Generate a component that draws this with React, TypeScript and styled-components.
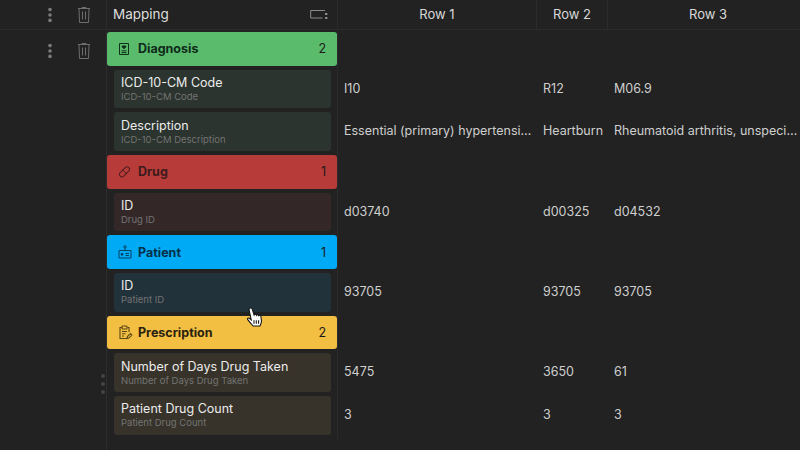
import styled, { createGlobalStyle } from 'styled-components';

type Field = { title: string; sub: string; values: string[] };
type Group = { name: string; tone: keyof typeof tones; fields: Field[] };

const tones = {
  green: { head: '#5abb6d', card: '#2b342e', ink: '#0e2a19', icon: '#0f3219' },
  red: { head: '#b73c39', card: '#332727', ink: '#3d1a1c', icon: '#4e1c1e' },
  blue: { head: '#00aaf5', card: '#22323b', ink: '#03304a', icon: '#054263' },
  yellow: { head: '#f2bf42', card: '#37332a', ink: '#2a2210', icon: '#5b4716' },
};

const groups: Group[] = [
  {
    name: 'Diagnosis',
    tone: 'green',
    fields: [
      { title: 'ICD-10-CM Code', sub: 'ICD-10-CM Code', values: ['I10', 'R12', 'M06.9'] },
      {
        title: 'Description',
        sub: 'ICD-10-CM Description',
        values: ['Essential (primary) hypertension', 'Heartburn', 'Rheumatoid arthritis, unspecified'],
      },
    ],
  },
  {
    name: 'Drug',
    tone: 'red',
    fields: [{ title: 'ID', sub: 'Drug ID', values: ['d03740', 'd00325', 'd04532'] }],
  },
  {
    name: 'Patient',
    tone: 'blue',
    fields: [{ title: 'ID', sub: 'Patient ID', values: ['93705', '93705', '93705'] }],
  },
  {
    name: 'Prescription',
    tone: 'yellow',
    fields: [
      { title: 'Number of Days Drug Taken', sub: 'Number of Days Drug Taken', values: ['5475', '3650', '61'] },
      { title: 'Patient Drug Count', sub: 'Patient Drug Count', values: ['3', '3', '3'] },
    ],
  },
];

function Dots() {
  return (
    <svg width="6" height="16" viewBox="0 0 6 16" fill="#7c7c7c">
      <circle cx="3" cy="2.600" r="1.800" />
      <circle cx="3" cy="8" r="1.800" />
      <circle cx="3" cy="13.400" r="1.800" />
    </svg>
  );
}

function Trash() {
  return (
    <svg width="14" height="16" viewBox="0 0 14 16" fill="none" stroke="#6e6e6e" strokeWidth="1">
      <path d="M1 1.500h12M5 1.500V.5h4v1M2 1.500l.5 14h9l.5-14" />
      <path d="M5.500 4.500v8M8.500 4.500v8" />
    </svg>
  );
}

function GroupIcon({ tone }: { tone: Group['tone'] }) {
  const color = tones[tone].icon;
  if (tone === 'green') {
    return (
      <svg width="14" height="14" viewBox="0 0 14 14" fill="none" stroke={color} strokeWidth="1">
        <path d="M1.500 1.500h9v11h-9z" />
        <path d="M6 6.800 4.200 5c-.6-.8.700-1.700 1.800-.7 1.100-1 2.400-.1 1.800.7z" fill={color} />
        <path d="M3.500 8.800h5M3.500 10.600h5" />
      </svg>
    );
  }
  if (tone === 'red') {
    return (
      <svg width="14" height="14" viewBox="0 0 14 14" fill="none" stroke={color} strokeWidth="1">
        <rect x="0.500" y="4.300" width="12" height="5" rx="2.500" transform="rotate(-45 6.500 6.800)" />
        <path d="M4.700 5l3.600 3.600" />
      </svg>
    );
  }
  if (tone === 'blue') {
    return (
      <svg width="14" height="14" viewBox="0 0 14 14" fill="none" stroke={color} strokeWidth="1">
        <path d="M1 5.500h12v7.500H1z" />
        <path d="M7 5.500V3.200" />
        <circle cx="7" cy="2" r="1.200" />
        <circle cx="4" cy="9.300" r="1" fill={color} />
        <path d="M7.500 8.500h3.500M7.500 10.500h3.500" />
      </svg>
    );
  }
  return (
    <svg width="15" height="15" viewBox="0 0 15 15" fill="none" stroke={color} strokeWidth="1.100">
      <path d="M4 2.500H2v11h7M9.500 2.500h1.500v4.500" />
      <rect x="4" y="1" width="5" height="3" rx="0.800" />
      <path d="M4 6.500h5M4 8.800h3.500M4 11h2" />
      <path d="M9 13.500l.4-1.900 3-3 1.500 1.500-3 3z" />
    </svg>
  );
}

function TableIcon() {
  return (
    <svg width="18" height="11" viewBox="0 0 18 11" fill="none">
      <path d="M15 1.500H.7v7.500H12.500" stroke="#8a8a8a" strokeWidth="1" />
      <rect x="15" y="4" width="2.400" height="2" fill="#8a8a8a" />
      <rect x="15" y="8" width="2.400" height="2" fill="#8a8a8a" />
    </svg>
  );
}

function HandCursor() {
  return (
    <svg width="17" height="20" viewBox="0 0 16 19">
      <path
        d="M3.600 1.300c.9-.7 2-.2 2.300.9L7.600 7.600c.4-.9 1.900-.9 2.300.2.500-.8 1.900-.6 2.200.4.600-.6 1.800-.3 2 .8l.5 4.200c.2 2-.5 3.100-1.400 4.800H6.700C5.600 16.800 3.600 14.700 1.600 12c-.7-1 .5-2.100 1.500-1.300l1.800 1.500L2.900 3c-.2-.7.100-1.300.7-1.700z"
        fill="#fff"
        stroke="#111"
        strokeWidth="1"
      />
      <path d="M7.500 12.500v3.500M9.700 12.500v3.500M11.900 12.500v3.500" stroke="#111" strokeWidth="1" />
    </svg>
  );
}

function App() {
  return (
    <Page>
      <GlobalStyle />
      <HeaderRow>
        <Gutter>
          <Dots />
          <Trash />
        </Gutter>
        <MappingHead>
          Mapping
          <TableIcon />
        </MappingHead>
        <ColumnHead>Row 1</ColumnHead>
        <ColumnHead>Row 2</ColumnHead>
        <ColumnHead>Row 3</ColumnHead>
      </HeaderRow>
      <Body>
        {groups.map((group, groupIndex) => (
          <div key={group.name}>
            <GroupRow>
              <Gutter>
                {groupIndex === 0 && <Dots />}
                {groupIndex === 0 && <Trash />}
              </Gutter>
              <GroupCell>
                <GroupHead $tone={group.tone}>
                  <IconSlot>
                    <GroupIcon tone={group.tone} />
                  </IconSlot>
                  <GroupName>{group.name}</GroupName>
                  <GroupCount>{group.fields.length}</GroupCount>
                </GroupHead>
              </GroupCell>
            </GroupRow>
            {group.fields.map((field) => (
              <FieldRow key={field.sub}>
                <Gutter />
                <FieldCell>
                  <FieldCard $tone={group.tone}>
                    <FieldTitle>{field.title}</FieldTitle>
                    <FieldSub>{field.sub}</FieldSub>
                  </FieldCard>
                </FieldCell>
                {field.values.map((value, i) => (
                  <ValueCell key={i}>{value}</ValueCell>
                ))}
              </FieldRow>
            ))}
          </div>
        ))}
        <Filler>
          <Gutter />
        </Filler>
      </Body>
      <DragHandle>
        <i />
        <i />
        <i />
      </DragHandle>
      <Pointer>
        <HandCursor />
      </Pointer>
    </Page>
  );
}

export default App;

const GlobalStyle = createGlobalStyle`
  html, body {
    margin: 0;
    background: #222222;
  }
`;

// last column runs past the window edge, Row 3 is centred on 708
const columns = '107px 231px 199px 71px 200px';

const Page = styled.div`
  position: relative;
  display: flex;
  flex-direction: column;
  width: 800px;
  height: 450px;
  overflow: hidden;
  background: #222222;
  color: #e4e4e4;
  font-family: Inter, 'Liberation Sans', sans-serif;
`;

const HeaderRow = styled.div`
  display: grid;
  grid-template-columns: ${columns};
  flex: none;
  height: 29px;
  border-bottom: 1px solid #2b2b2b;
`;

const Gutter = styled.div`
  display: flex;
  align-items: center;
  gap: 24px;
  padding-left: 47px;
  border-right: 1px solid #2d2d2d;
  box-sizing: border-box;
`;

const MappingHead = styled.div`
  display: flex;
  align-items: center;
  justify-content: space-between;
  padding: 0 9px 1px 6px;
  font-size: 13.500px;
  color: #dedede;
  border-right: 1px solid #2b2b2b;
`;

const ColumnHead = styled.div`
  display: flex;
  align-items: center;
  justify-content: center;
  padding-bottom: 1px;
  font-size: 13px;
  color: #d8d8d8;
  border-right: 1px solid #2b2b2b;

  &:last-child {
    border-right: 0;
  }
`;

const Body = styled.div`
  display: flex;
  flex-direction: column;
  flex: 1;
  padding-top: 2px;
`;

const Filler = styled.div`
  display: grid;
  grid-template-columns: ${columns};
  flex: 1;
`;

const GroupRow = styled.div`
  display: grid;
  grid-template-columns: ${columns};
  height: 37.500px;
`;

const GroupCell = styled.div`
  border-right: 1px solid #2b2b2b;
`;

const GroupHead = styled.div<{ $tone: Group['tone'] }>`
  display: flex;
  align-items: center;
  height: 33.500px;
  padding: 0 11px;
  border-radius: 3px;
  background: ${(p) => tones[p.$tone].head};
  color: ${(p) => tones[p.$tone].ink};
`;

const IconSlot = styled.span`
  display: flex;
  width: 20px;
`;

const GroupName = styled.span`
  flex: 1;
  font-size: 12.500px;
  font-weight: 700;
`;

const GroupCount = styled.span`
  font-size: 12.500px;
  color: #1a1a1a;
`;

const FieldRow = styled.div`
  display: grid;
  grid-template-columns: ${columns};
  height: 42.750px;
`;

const FieldCell = styled.div`
  padding: 0 6px 0 6.500px;
  border-right: 1px solid #2b2b2b;
`;

const FieldCard = styled.div<{ $tone: Group['tone'] }>`
  display: flex;
  flex-direction: column;
  justify-content: center;
  height: 38.750px;
  padding: 0.500px 0 0 7.500px;
  box-sizing: border-box;
  border-radius: 3px;
  background: ${(p) => tones[p.$tone].card};
`;

const FieldTitle = styled.div`
  font-size: 12.500px;
  line-height: 15px;
  color: #ececec;
`;

const FieldSub = styled.div`
  margin-top: 1px;
  font-size: 9.500px;
  line-height: 12px;
  color: #737373;
`;

const ValueCell = styled.div`
  height: 37px;
  padding: 0 5px 0 6px;
  line-height: 37px;
  font-size: 12.500px;
  color: #cfcfcf;
  white-space: nowrap;
  overflow: hidden;
  text-overflow: ellipsis;

  &:nth-child(4) {
    padding-right: 0;
  }

  &:last-child {
    padding-right: 9px;
  }
`;

const DragHandle = styled.div`
  position: absolute;
  left: 101px;
  top: 374px;
  display: flex;
  flex-direction: column;
  gap: 4px;

  i {
    width: 4px;
    height: 4px;
    border-radius: 50%;
    background: #444444;
  }
`;

const Pointer = styled.div`
  position: absolute;
  left: 246px;
  top: 307px;
  line-height: 0;
`;
